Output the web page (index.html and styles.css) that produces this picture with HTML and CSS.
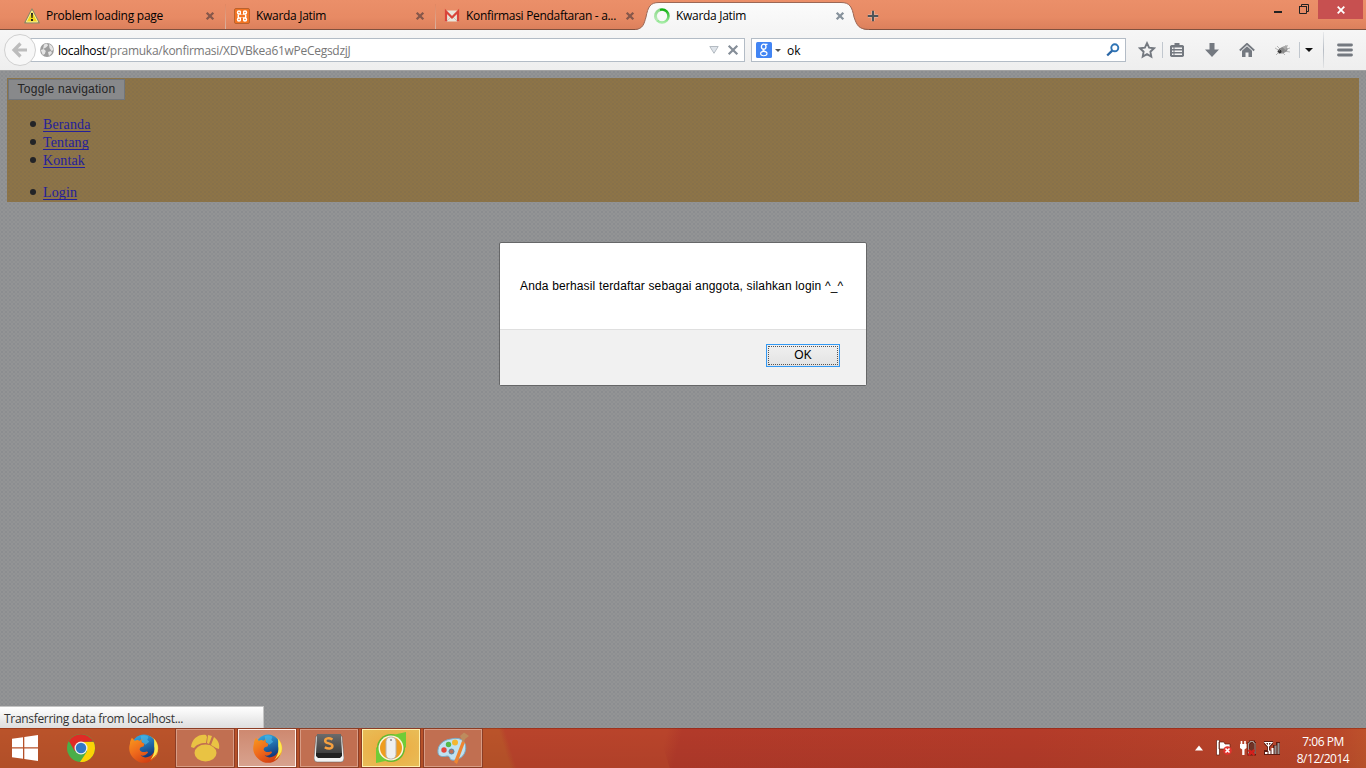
FILE: index.html
```html
<!DOCTYPE html>
<html lang="id">
<head>
<meta charset="utf-8">
<title>Kwarda Jatim</title>
<link rel="stylesheet" href="styles.css">
</head>
<body>
<svg class="defs" width="0" height="0">
  <defs>
    <linearGradient id="ffo" x1="0" y1="0" x2="0.7" y2="1"><stop offset="0" stop-color="#f99a1c"/><stop offset=".5" stop-color="#ef6a1c"/><stop offset="1" stop-color="#cf3d12"/></linearGradient>
    <linearGradient id="ffb" x1="0" y1="0" x2="0.4" y2="1"><stop offset="0" stop-color="#35b5ee"/><stop offset="1" stop-color="#143a7c"/></linearGradient>
    <linearGradient id="tabg" x1="0" y1="0" x2="0" y2="1"><stop offset="0" stop-color="#fbfbfb"/><stop offset="1" stop-color="#f5f5f5"/></linearGradient>
    <linearGradient id="key" x1="0" y1="0" x2="0" y2="1"><stop offset="0" stop-color="#6b6b6b"/><stop offset="1" stop-color="#393939"/></linearGradient>
    <linearGradient id="spin" x1="0" y1="0" x2="0" y2="1"><stop offset="0" stop-color="#12b012"/><stop offset="1" stop-color="#a5eca5"/></linearGradient>
    <symbol id="x" viewBox="0 0 10 10"><path d="M1.700 1.700l6.600 6.600M8.300 1.700L1.700 8.300" stroke="currentColor" stroke-width="2.300"/></symbol>
    <symbol id="fox" viewBox="0 0 32 32">
      <circle cx="17.500" cy="16" r="13.700" fill="#f6b62c"/>
      <circle cx="16.500" cy="14" r="12.500" fill="url(#ffb)"/>
      <path d="M13 3c4-1.600 7-.5 8 1l-1 3 2 2-4 3-4-3z" fill="#50bdea" opacity=".6"/>
      <path d="M4 5l3 3c2-1 3-1 5 0l3-2c-2 3-1 4 2 5l-1 3c-2 0-4 1-4 3 1 3 5 3 7 2 2 0 2 1 1 2-2 2-4 3-7 2 4 4 10 2 13-2 2-3 3-6 2-10 3 6 2 12-2 16-5 5-14 5-19 0C2 23 0 17 2 11c0-2 1-4 2-6z" fill="url(#ffo)"/>
      <path d="M27 6c6 8 5 16-4 22 3-4 5-9 4-14z" fill="#fcea50"/>
    </symbol>
  </defs>
</svg>
<div class="screen">
  <header class="tabstrip">
    <div class="tab">
      <svg class="fav" viewBox="0 0 16 16"><path d="M8 1L15.200 14.800H.8z" fill="#f1d81c" stroke="#8d8a68" stroke-width="1.300" stroke-linejoin="round"/><path d="M8 2.800L13.700 13.900H2.300z" fill="none" stroke="#fff6b0" stroke-width=".8"/><path d="M7 5h2l-.4 5H7.400zM7 11h2v2H7z" fill="#222"/></svg>
      <span class="tab-title t1">Problem loading page</span>
      <svg class="close"><use href="#x"/></svg>
    </div>
    <div class="tab divided">
      <svg class="fav" viewBox="0 0 16 16"><rect x=".5" y=".5" width="15" height="15" rx="1.500" fill="#f37321" stroke="#b9622f"/><path d="M6.500 6V4.500a1.500 1.500 0 1 0-1.500 1.500h6a1.500 1.500 0 1 0-1.500-1.500V6M6.500 10v1.500A1.500 1.500 0 1 1 5 10h6a1.500 1.500 0 1 1-1.500 1.500V10M5 5.500C4 6.500 4 9.500 5 10.500M11 5.500c1 1 1 4 0 5" fill="none" stroke="#fff" stroke-width="1.500"/><path d="M7 4h2v2.500H7zM7 9.500h2V12H7z" fill="#f37321"/></svg>
      <span class="tab-title t2">Kwarda Jatim</span>
      <svg class="close"><use href="#x"/></svg>
    </div>
    <div class="tab divided">
      <svg class="fav" viewBox="0 0 16 16"><path d="M1 2.500h14v11H1z" fill="#e9e6dc"/><path d="M3 13l5-5 5 5" fill="none" stroke="#c9c5b9"/><path d="M2 13.500V3.500l6 6 6-6v10" fill="none" stroke="#d9453a" stroke-width="2.200"/></svg>
      <span class="tab-title t3">Konfirmasi Pendaftaran - a...</span>
      <svg class="close"><use href="#x"/></svg>
    </div>
    <div class="tab active">
      <svg class="shape" viewBox="0 0 234 28"><path d="M0 28C8 27 9 22 11 15C13 5 15 .5 24 .5H206C215 .5 217 5 219 15C222 24 224 27 232 28z" fill="url(#tabg)"/><path d="M0 27.500C8 27 9 22 11 15C13 5 15 .5 24 .5H206C215 .5 217 5 219 15C222 24 224 27 234 27.500" fill="none" stroke="#9b6755" stroke-width="1"/></svg>
      <svg class="fav" viewBox="0 0 16 16"><circle cx="8" cy="8" r="6.500" fill="none" stroke="url(#spin)" stroke-width="2.600"/><path d="M3.800 12.200A6 6 0 0 1 6 1.800" fill="none" stroke="#d8f3d5" stroke-width="3" opacity=".6"/></svg>
      <span class="tab-title t4">Kwarda Jatim</span>
      <svg class="close slate"><use href="#x"/></svg>
    </div>
    <svg class="newtab" viewBox="0 0 12 12"><path d="M6 1v10M1 6h10" stroke="#d9dde0" stroke-width="4" opacity=".35"/><path d="M6 .8v10.400M.8 6h10.400" stroke="#4e5459" stroke-width="2"/></svg>
    <div class="winbtns">
      <svg class="min" viewBox="0 0 8 2"><path d="M0 0h8v2H0z" fill="#222"/></svg>
      <svg class="restore" viewBox="0 0 10 10"><path d="M2.500 2V.5h7v7H8M.5 2.500h7v7h-7z" fill="none" stroke="#222"/><path d="M0 2h8v1H0z" fill="#222"/></svg>
      <div class="quit"><svg viewBox="0 0 8 8"><path d="M.7.7l6.600 6.600M7.300.7L.7 7.300" stroke="#fff" stroke-width="1.800"/></svg></div>
    </div>
  </header>

  <div class="toolbar">
    <svg class="back" viewBox="0 0 34 34"><circle cx="17" cy="17" r="15.500" fill="#f7f7f7" stroke="#d0d0d0"/><path d="M17.500 10.500L11 17l6.500 6.500M11.500 17h12.500" fill="none" stroke="#bcbcbc" stroke-width="3.200"/></svg>
    <div class="urlbar">
      <svg class="globe" viewBox="0 0 14 14"><circle cx="7" cy="7" r="6.900" fill="#9d9d9d"/><path d="M4 1.500l3-1 1 2-2 2-3 1.500zM9 1l3 2 1.500 4-2 1-2-3zM.8 7l3-1 2 2-1 3-2 1zM8 9l3-1 1 2-3 3z" fill="#e4e4e4"/></svg>
      <span class="url"><b>localhost</b>/pramuka/konfirmasi/XDVBkea61wPeCegsdzjJ</span>
      <svg class="drop" viewBox="0 0 10 8"><path d="M.8.5h8.400L5 7.300z" fill="#dfe4ea" stroke="#b4bbc2"/></svg>
      <svg class="stop" viewBox="0 0 12 12"><path d="M1.700 1.700l8.600 8.600M10.300 1.700l-8.600 8.600" stroke="#858e98" stroke-width="2.200"/></svg>
    </div>
    <div class="search">
      <svg class="google" viewBox="0 0 16 16"><rect width="16" height="16" rx="1.500" fill="#4285f4"/><ellipse cx="7.700" cy="4.700" rx="2.300" ry="2.500" fill="none" stroke="#fff" stroke-width="1.300"/><ellipse cx="7.800" cy="11.600" rx="3.200" ry="2.200" fill="none" stroke="#fff" stroke-width="1.100"/><path d="M9 2.300h2.500M8 7.200l-1 1 2.500 1.500" fill="none" stroke="#fff" stroke-width="1.200"/></svg>
      <svg class="engine" viewBox="0 0 6 3"><path d="M0 0h6L3 3z" fill="#555"/></svg>
      <span class="query">ok</span>
      <svg class="mag" viewBox="0 0 14 14"><circle cx="8.800" cy="4.800" r="3.500" fill="none" stroke="#2f74b5" stroke-width="1.900"/><path d="M6.200 7.600L1.200 12.500" stroke="#2b67a6" stroke-width="2.300"/></svg>
    </div>
    <svg class="star" viewBox="0 0 18 18"><path d="M9 2.200l2.100 4.500 4.900.6-3.600 3.400.9 4.900L9 13.200l-4.300 2.400.9-4.900L2 7.300l4.900-.6z" fill="none" stroke="#747980" stroke-width="1.900"/></svg>
    <i class="rule r1"></i>
    <svg class="list" viewBox="0 0 14 14"><path d="M1.500 2H4.500V0h5v2h3L14 3v10l-1.500 1h-11L0 13V3z" fill="#747980"/><path d="M2 4.500h1.500V6H2zM4.500 4.500H12V6H4.500zM2 7.500h1.500V9H2zM4.500 7.500H12V9H4.500zM2 10.500h1.500V12H2zM4.500 10.500H12V12H4.500z" fill="#f4f4f4"/></svg>
    <svg class="down" viewBox="0 0 14 14"><path d="M4.500 0h5v6.500H14L7 14 0 6.500h4.500z" fill="#747980"/></svg>
    <svg class="home" viewBox="0 0 16 14"><path d="M.8 7.500L8 .8l7.200 6.700" fill="none" stroke="#747980" stroke-width="1.800"/><path d="M3 7.700l5-4.500 5 4.500V14H9.500V9.500h-3V14H3z" fill="#747980"/></svg>
    <svg class="fly" viewBox="0 0 16 14"><ellipse cx="8" cy="7" rx="4.800" ry="3" transform="rotate(-25 8 7)" fill="#888"/><circle cx="4.500" cy="8.500" r="1.900" fill="#333"/><path d="M0 5l5 3M2 3l4 4M11 2L9 6M15 5L9 7M15 9L9 8M10 12L7 9M1 12l3-3" stroke="#999" stroke-width=".7"/><path d="M7 4l6-2-2 5z" fill="#aaa"/></svg>
    <i class="rule r2"></i>
    <svg class="caret" viewBox="0 0 8 4"><path d="M0 0h8L4 4z" fill="#111"/></svg>
    <i class="rule tall"></i>
    <svg class="menu" viewBox="0 0 16 14"><path d="M1.500 2h13M1.500 7h13M1.500 12h13" stroke="#747980" stroke-width="2.800" stroke-linecap="round"/></svg>
  </div>

  <main class="page">
    <nav class="navbar">
      <button class="toggle">Toggle navigation</button>
      <ul class="links">
        <li><a href="#">Beranda</a></li>
        <li><a href="#">Tentang</a></li>
        <li><a href="#">Kontak</a></li>
      </ul>
      <ul class="links last">
        <li><a href="#">Login</a></li>
      </ul>
    </nav>
    <section class="dialog">
      <p class="message">Anda berhasil terdaftar sebagai anggota, silahkan login ^_^</p>
      <div class="actions"><button class="ok"><span>OK</span></button></div>
    </section>
    <div class="status"><span>Transferring data from localhost...</span></div>
  </main>

  <footer class="taskbar">
    <div class="start"><svg width="26" height="26" viewBox="0 0 26 26"><path d="M0 3.700L11 2.200V12.300H0zM12.300 2L26 0V12.300H12.300zM0 13.500H11V23.700L0 22.200zM12.300 13.500H26V26L12.300 24z" fill="#fff"/></svg></div>
    <div class="task"><svg width="28" height="28" viewBox="0 0 28 28"><circle cx="14" cy="14" r="14" fill="#4aae48"/><path d="M1.900 7A14 14 0 0 1 26.100 7.500L14 8 8 17.500z" fill="#df2b26"/><path d="M26.600 8A14 14 0 0 1 13 28L20 17.500 16 8z" fill="#fbd305"/><circle cx="14" cy="14" r="6.500" fill="#f1f1ed"/><circle cx="14" cy="14" r="5.200" fill="#3178c6"/></svg></div>
    <div class="task"><svg width="31" height="31"><use href="#fox"/></svg></div>
    <div class="task"><div class="btn"><svg width="30" height="28" viewBox="0 0 30 28"><g fill="#e9c343"><ellipse cx="15.500" cy="19" rx="11" ry="8.500"/><path d="M1 13C2 5 8 0 16 1l1 2-1 6C10 9 6 11 4 14zM18 1l4 1-3 8-2-1zM24 3c4 3 6 7 5 12l-3-1-5-3z"/></g></svg></div></div>
    <div class="task"><div class="btn current"><svg width="31" height="31"><use href="#fox"/></svg></div></div>
    <div class="task"><div class="btn"><svg width="30" height="29" viewBox="0 0 30 29"><path d="M2 2h26l2 22q0 4-3 4H3q-3 0-3-4z" fill="#f2f2f2" stroke="#555" stroke-width=".5"/><path d="M3 0h24l1 19-1 3H3l-1-3z" fill="url(#key)"/><path d="M2 19h26v3l-2 2H4l-2-2z" fill="#222"/><path d="M18.500 5.500C15 3.500 11 4 11.200 7c.3 3.300 7.200 1.500 7.200 5 0 3-4.300 3.300-7.600 1.200" fill="none" stroke="#f5a040" stroke-width="2.500"/></svg></div></div>
    <div class="task"><div class="btn alert"><svg width="32" height="32" viewBox="0 0 32 32"><circle cx="16" cy="16" r="14" fill="#64b92f"/><path d="M18 3L31 0v16zM1 15L1 31l14-3z" fill="#70cc36"/><circle cx="16" cy="16" r="12.500" fill="#fff5dc"/><circle cx="16" cy="16" r="11" fill="#ef9d1e"/><rect x="11" y="5" width="10" height="22" rx="4.500" fill="#efefef" stroke="#b9b4ad"/><path d="M16 7v2" stroke="#888" stroke-width="1.500"/></svg></div></div>
    <div class="task"><div class="btn"><svg width="32" height="32" viewBox="0 0 32 32"><path d="M14 7C25 4 31 11 28 20c-2 6-9 9-13 8-3 0-1-4-5-4-4 1-8 1-9-3C0 13 6 8 14 7z" fill="#bfe2f2" stroke="#79abc8"/><circle cx="7" cy="18" r="2.700" fill="#e4483c"/><circle cx="11.500" cy="12.500" r="2.700" fill="#55b848"/><circle cx="18" cy="10.500" r="3" fill="#f4b731"/><circle cx="14.500" cy="19.500" r="2.500" fill="#bd7158" stroke="#5685a7"/><path d="M17 30L25 9l3 1-8 22z" fill="#ee8532"/><path d="M25.500 10l-1-3-1.500-3 4-3.500 5 3.500-4 3-1 3z" fill="#bd8c5e"/></svg></div></div>
    <div class="tray">
      <svg width="8" height="6" viewBox="0 0 8 6"><path d="M0 5.500L4 .5l4 5z" fill="#fff"/></svg>
      <svg width="16" height="16" viewBox="0 0 16 16"><path d="M.5 0h3v15h-3zM3 2h5l1 2h5v7H9L8 9H3z" fill="#fff" stroke="#5e1c10" stroke-width=".7"/><circle cx="11.500" cy="10.500" r="4.300" fill="#e2342e"/><path d="M9.500 8.500l4 4m0-4l-4 4" stroke="#fff" stroke-width="1.600"/></svg>
      <svg width="16" height="16" viewBox="0 0 16 16"><path d="M8.500 3H10V1.500h4V3h1v11.500H8.500z" fill="#703226" stroke="#5e1c10" stroke-width="2"/><path d="M8.500 14V3H10V1.500h3.500V3H15v11" fill="none" stroke="#a89b95"/><path d="M1.500 1v4M5 1v4" stroke="#fff" stroke-width="1.600"/><path d="M0 4h6.500v4L4.500 9.500V15H2.200V9.500L0 8z" fill="#fff"/><path d="M8.500 10l6 5m0-5l-6 5" stroke="#d3201c" stroke-width="2.300"/></svg>
      <svg width="16" height="14" viewBox="0 0 16 14"><path d="M0 0h9v3L6 6v3H3V6L0 3zM0 9h16v5H0zM9 4h3V1h4v12H9z" fill="#5e1c10"/><path d="M1 1.500h7L4.500 5.500zM4.500 1v9" fill="none" stroke="#fff" stroke-width="1.100"/><path d="M1 11h2.500v2H1zM4.500 9.500h2V13h-2zM7.500 7h2v6h-2z" fill="#fff"/><path d="M10.500 4.500h2V13h-2zM13.500 2h2v11h-2z" fill="#979390"/></svg>
      <div class="clock"><span class="time">7:06 PM</span><span class="date">8/12/2014</span></div>
    </div>
  </footer>
</div>
</body>
</html>
```
FILE: styles.css
```css
* { box-sizing: border-box; }
body { margin: 0; width: 1366px; height: 768px; overflow: hidden; font: 12px "Open Sans", "Noto Sans", sans-serif; color: #000; }
svg { display: block; flex: none; }
.defs { position: absolute; }
.screen { display: flex; flex-direction: column; width: 1366px; height: 768px; }
.tabstrip { display: flex; flex: none; height: 30px; padding-left: 15px; background: linear-gradient(#eb8f69 0%, #e78a64 60%, #dc805c 100%); border-bottom: 1px solid #80513f; }
.tab { position: relative; display: flex; align-items: center; width: 210px; height: 30px; padding: 2px 10px 0 9px; }
.tab.divided::before { content: ""; position: absolute; left: 0; top: 4px; width: 1px; height: 25px; background: linear-gradient(#e28761, #d9b3a2); }
.tab .shape { position: absolute; left: -10px; top: 2px; width: 234px; height: 28px; }
.fav { position: relative; width: 16px; height: 16px; margin-right: 6px; }
.tab-title { position: relative; flex: 1; white-space: nowrap; line-height: 16px; }
.t1 { letter-spacing: -.26px; }
.t2, .t4 { letter-spacing: -.3px; }
.t3 { letter-spacing: -.31px; }
.close { position: relative; width: 10px; height: 10px; color: #86574a; }
.close.slate { color: #87929c; }
.newtab { width: 12px; height: 12px; margin: 10px 0 0 12px; }
.winbtns { display: flex; margin-left: auto; padding-right: 3px; }
.min { width: 8px; height: 2px; margin: 11px 17px 0 0; }
.restore { width: 10px; height: 10px; margin: 4px 9px 0 0; }
.quit { display: flex; align-items: center; justify-content: center; width: 45px; height: 19px; background: #c75050; }
.quit svg { width: 8px; height: 8px; }

.toolbar { display: flex; align-items: center; flex: none; height: 40px; background: linear-gradient(#f6f6f6, #eee); }
.back { position: relative; z-index: 1; width: 34px; height: 34px; margin-left: 3px; }
.urlbar, .search { display: flex; align-items: center; height: 24px; background: #fff; border: 1px solid #b3bcc6; }
.urlbar { width: 715px; margin-left: -7px; padding: 0 5px 0 9px; }
.globe { width: 14px; height: 14px; margin-right: 4px; }
.url { flex: 1; padding-top: 1px; color: #777; white-space: nowrap; letter-spacing: -.28px; }
.url b { font-weight: 400; color: #000; }
.drop { width: 10px; height: 8px; margin-right: 12px; flex: none; margin-left: 7px; }
.stop { width: 12px; height: 12px; margin-left: -5px; position: relative; }
.urlbar .drop { margin-right: 13px; }
.search { width: 375px; margin-left: 6px; padding: 0 5px 0 4px; }
.google { width: 16px; height: 16px; }
.engine { width: 6px; height: 3px; margin: 0 6px 0 3px; }
.query { flex: 1; padding-top: 1px; }
.mag { width: 14px; height: 14px; }
.star { width: 18px; height: 18px; margin-left: 12px; }
.rule { width: 1px; height: 16px; background: #c1c7ce; }
.r1 { margin: 0 7px 0 6px; }
.list { width: 14px; height: 14px; }
.down { width: 14px; height: 14px; margin-left: 21px; }
.home { width: 16px; height: 14px; margin-left: 20px; }
.fly { width: 16px; height: 14px; margin-left: 20px; }
.r2 { margin-left: 8px; }
.caret { width: 8px; height: 4px; margin-left: 5px; }
.tall { height: 36px; margin-left: 10px; background: linear-gradient(#e9eaec, #b6bcc4, #e4e5e6); }
.menu { width: 16px; height: 14px; margin-left: 13px; }

.page { position: relative; flex: 1; display: flex; flex-direction: column; padding: 8px 7px 0; background: radial-gradient(circle, #8b8d90 0 .8px, transparent 1px) 0 0 / 4px 4px, radial-gradient(circle, #8e9092 0 .8px, transparent 1px) 2px 2px / 4px 4px, #939495; box-shadow: inset 0 1px #a1a1a1; }
.navbar { height: 124px; padding: 1px 1px 0; background: radial-gradient(circle, #87714a 0 .8px, transparent 1px) 0 0 / 4px 4px, radial-gradient(circle, #89724a 0 .8px, transparent 1px) 2px 2px / 4px 4px, #8d7447; }
.toggle { display: block; width: 117px; height: 21px; padding: 0; border: 1px solid #71767c; background: #88898b; color: #242424; font: 12px/19px "Liberation Sans", Arial, sans-serif; letter-spacing: .26px; }
.links { margin: 16px 0 0; padding: 0 0 0 35px; list-style: none; font: 14px/18px "Liberation Serif", "Times New Roman", serif; letter-spacing: .13px; color: #202124; }
.links li::before { content: ""; display: inline-block; width: 6px; height: 6px; margin: 0 7px 2px -13px; border-radius: 50%; background: #232427; }
.links.last { margin-top: 14px; }
.links a { color: #24209a; text-decoration: underline; text-underline-offset: 2px; text-decoration-skip-ink: none; }
.dialog { position: absolute; left: 499px; top: 172px; width: 368px; height: 144px; display: flex; flex-direction: column; background: #fff; border: 1px solid #666768; border-radius: 2px; font-family: "Liberation Sans", Arial, sans-serif; }
.message { flex: 1; margin: 0; padding: 36px 0 0 20px; line-height: 14px; white-space: nowrap; letter-spacing: .155px; }
.actions { display: flex; justify-content: flex-end; height: 56px; padding: 14px 26px 0; background: #f1f1f1; border-top: 1px solid #dfdfdf; }
.ok { width: 74px; height: 23px; padding: 1px; border: 1px solid #3399f3; background: linear-gradient(#f0f0f0, #e3e3e3); font: 12px/17px "Liberation Sans", Arial, sans-serif; }
.ok span { display: block; height: 19px; border: 1px dotted #555; }
.status { position: absolute; left: 0; bottom: 0; width: 264px; height: 22px; padding-left: 4px; background: linear-gradient(#fff, #dedede); border: 1px solid #c4c4c4; border-width: 1px 1px 0 0; color: #333; line-height: 23px; letter-spacing: -.31px; white-space: nowrap; }

.taskbar { display: flex; flex: none; height: 40px; background: linear-gradient(rgba(110,20,5,.35) 0 1px, transparent 1px, rgba(0,0,0,.05)), linear-gradient(73deg, #ba532a 0 488px, #b9432b 494px, #b9442b 640px, transparent 641px), linear-gradient(105deg, #b9442b 0 645px, #b23a2a 660px, #b43b29 1000px, #b9462a 1290px, #bf552c); }
.start { display: flex; align-items: center; width: 50px; padding-left: 12px; }
.task { display: flex; align-items: center; justify-content: center; width: 62px; }
.btn { display: flex; align-items: center; justify-content: center; width: 58px; height: 38px; background: #c16f51; border: 1px solid #d89c85; box-shadow: 0 0 0 1px #8c3d25; }
.btn.current { background: linear-gradient(#ce8970, #d8a28e); border-color: #fff0e9; }
.btn.alert { background: radial-gradient(#eda83e, #e8bd57); border: 1px solid #fff0ae; }
.tray { display: flex; align-items: center; margin-left: auto; padding-right: 15px; color: #fff; }
.tray > svg { margin-left: 8px; }
.tray > svg:first-child { margin-right: 5px; }
.clock { display: flex; flex-direction: column; align-items: center; width: 56px; margin-left: 15px; line-height: 17px; letter-spacing: -.48px; padding-top: 3px; white-space: nowrap; }
```
